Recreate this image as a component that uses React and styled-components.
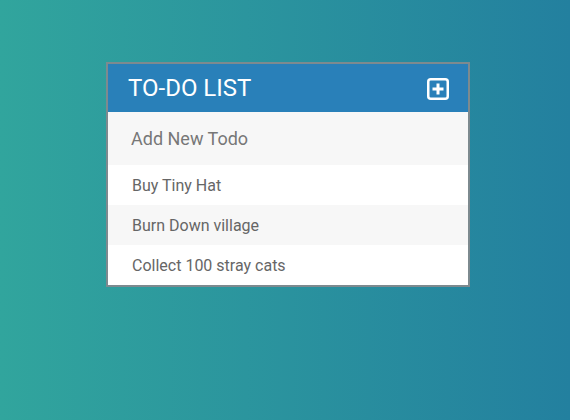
import styled, { createGlobalStyle } from 'styled-components'

const GlobalStyle = createGlobalStyle`
  html, body {
    margin: 0;
    padding: 0;
  }
  body {
    font-family: Roboto, "Liberation Sans", sans-serif;
    background: linear-gradient(90deg, #31a59d, #23809f);
    min-height: 420px;
  }
`

const todos = ['Buy Tiny Hat', 'Burn Down village', 'Collect 100 stray cats']

const PlusSquare = () => (
  <svg width='22' height='22' viewBox='0 0 22 22' fill='none'>
    <rect x='1.25' y='1.25' width='19.5' height='19.5' rx='2.5' stroke='#fff' strokeWidth='2.5' />
    <path d='M11 5.5v11M5.5 11h11' stroke='#fff' strokeWidth='3' />
  </svg>
)

const App = () => {
  return (
    <>
      <GlobalStyle />
      <Page>
        <Container>
          <Header>
            <h1>TO-DO LIST</h1>
            <AddButton type='button'>
              <PlusSquare />
            </AddButton>
          </Header>
          <NewTodo type='text' placeholder='Add New Todo' />
          <List>
            {todos.map((todo, i) => (
              <Item key={todo} striped={i % 2 === 1}>{todo}</Item>
            ))}
          </List>
        </Container>
      </Page>
    </>
  )
}

export default App

const Page = styled.div`
  display: flex;
  padding: 62px 0 0 106px;
`

const Container = styled.div`
  width: 360px;
  border: 2px solid #7d8a8f;
  background: #fff;
`

const Header = styled.div`
  display: flex;
  align-items: center;
  justify-content: space-between;
  height: 48px;
  padding: 0 19px 0 20px;
  background: #2980b9;
  box-sizing: border-box;
  h1 {
    margin: 0;
    color: #fff;
    font-size: 24px;
    font-weight: 400;
    line-height: 1;
  }
`

const AddButton = styled.button`
  display: flex;
  padding: 0;
  margin-top: 1px;
  border: none;
  background: transparent;
  cursor: pointer;
`

const NewTodo = styled.input`
  display: block;
  width: 100%;
  height: 53px;
  box-sizing: border-box;
  padding: 0 0 0 23px;
  border: none;
  outline: none;
  background: #f7f7f7;
  font-family: Roboto, "Liberation Sans", sans-serif;
  font-size: 18px;
  color: #666;
  &::placeholder {
    color: #777;
  }
`

const List = styled.ul`
  margin: 0;
  padding: 0;
  list-style: none;
`

const Item = styled.li.withConfig({ shouldForwardProp: p => p !== 'striped' })`
  display: flex;
  align-items: center;
  height: 40px;
  padding-left: 24px;
  font-size: 16px;
  color: #666;
  background: ${props => props.striped ? '#f7f7f7' : '#fff'};
`
